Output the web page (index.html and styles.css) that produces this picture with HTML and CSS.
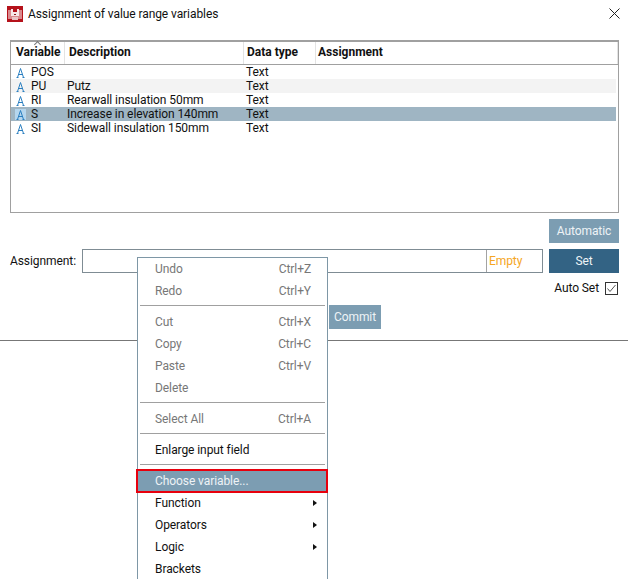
FILE: index.html
```html
<!DOCTYPE html>
<html lang="en">
<head>
    <meta charset="UTF-8">
    <title>Assignment of value range variables</title>
    <link rel="stylesheet" href="styles.css">
</head>
<body>
<div class="title_bar">
    <svg class="app_icon" width="16" height="16" viewBox="0 0 16 16">
        <rect width="16" height="16" fill="#b5121b"/>
        <path d="M1 4h14v9H1z" fill="#d98a8e"/>
        <path d="M4 3h8v7H4z" fill="#f7e6e7"/>
        <path d="M6 3h4v3H6z" fill="#b5121b"/>
        <path d="M5 11h6v3H5z" fill="#e9c3c5"/>
        <path d="M7 8h2v1H7z" fill="#8c1a20"/>
    </svg>
    <span class="title_text">Assignment of value range variables</span>
    <svg class="close_icon" width="11" height="11" viewBox="0 0 11 11">
        <path d="M0.5 0.5L10.5 10.5M10.5 0.5L0.5 10.5" stroke="#222" stroke-width="1" fill="none"/>
    </svg>
</div>

<div class="var_table">
    <div class="t_head">
        <div class="c_var">Variable<i class="sort_mark"></i></div>
        <div class="c_desc">Description</div>
        <div class="c_type">Data type</div>
        <div class="c_assign">Assignment</div>
    </div>
    <div class="t_row">
        <div class="c_var"><svg class="a_icon" width="11" height="11" viewBox="0 0 11 11"><path d="M1.5 10.5h2M7.5 10.5h2M2.5 10.5L5.5 1.5L8.5 10.5M3.5 7.5h4" stroke="#2a7fc0" fill="none"/></svg>POS</div>
        <div class="c_desc"></div>
        <div class="c_type">Text</div>
        <div class="c_assign"></div>
    </div>
    <div class="t_row alt">
        <div class="c_var"><svg class="a_icon" width="11" height="11" viewBox="0 0 11 11"><path d="M1.5 10.5h2M7.5 10.5h2M2.5 10.5L5.5 1.5L8.5 10.5M3.5 7.5h4" stroke="#2a7fc0" fill="none"/></svg>PU</div>
        <div class="c_desc">Putz</div>
        <div class="c_type">Text</div>
        <div class="c_assign"></div>
    </div>
    <div class="t_row">
        <div class="c_var"><svg class="a_icon" width="11" height="11" viewBox="0 0 11 11"><path d="M1.5 10.5h2M7.5 10.5h2M2.5 10.5L5.5 1.5L8.5 10.5M3.5 7.5h4" stroke="#2a7fc0" fill="none"/></svg>RI</div>
        <div class="c_desc">Rearwall insulation 50mm</div>
        <div class="c_type">Text</div>
        <div class="c_assign"></div>
    </div>
    <div class="t_row sel">
        <div class="c_var"><svg class="a_icon on" width="11" height="11" viewBox="0 0 11 11"><path d="M1.5 10.5h2M7.5 10.5h2M2.5 10.5L5.5 1.5L8.5 10.5M3.5 7.5h4" stroke="#2a7fc0" fill="none"/></svg>S</div>
        <div class="c_desc">Increase in elevation 140mm</div>
        <div class="c_type">Text</div>
        <div class="c_assign"></div>
    </div>
    <div class="t_row">
        <div class="c_var"><svg class="a_icon" width="11" height="11" viewBox="0 0 11 11"><path d="M1.5 10.5h2M7.5 10.5h2M2.5 10.5L5.5 1.5L8.5 10.5M3.5 7.5h4" stroke="#2a7fc0" fill="none"/></svg>SI</div>
        <div class="c_desc">Sidewall insulation 150mm</div>
        <div class="c_type">Text</div>
        <div class="c_assign"></div>
    </div>
</div>

<div class="btn_line auto_line">
    <a href="javascript:;" class="btn auto_btn">Automatic</a>
</div>
<div class="assign_line">
    <label class="assign_label">Assignment:</label>
    <div class="assign_box">
        <div class="assign_input"></div>
        <div class="assign_state">Empty</div>
    </div>
    <a href="javascript:;" class="btn set_btn">Set</a>
</div>
<div class="autoset_line">
    <span>Auto Set</span>
    <svg class="check_box" width="13" height="13" viewBox="0 0 13 13">
        <rect x="0.5" y="0.5" width="12" height="12" fill="#fff" stroke="#333"/>
        <path d="M2.5 6.5L5 9.5L10.5 3" stroke="#555" fill="none"/>
    </svg>
</div>
<div class="commit_line">
    <a href="javascript:;" class="btn commit_btn">Commit</a>
</div>
<div class="rule"></div>

<div class="menu">
    <div class="m_item off"><span>Undo</span><span>Ctrl+Z</span></div>
    <div class="m_item off"><span>Redo</span><span>Ctrl+Y</span></div>
    <div class="m_sep"></div>
    <div class="m_item off"><span>Cut</span><span>Ctrl+X</span></div>
    <div class="m_item off"><span>Copy</span><span>Ctrl+C</span></div>
    <div class="m_item off"><span>Paste</span><span>Ctrl+V</span></div>
    <div class="m_item off"><span>Delete</span></div>
    <div class="m_sep"></div>
    <div class="m_item off"><span>Select All</span><span>Ctrl+A</span></div>
    <div class="m_sep"></div>
    <div class="m_item"><span>Enlarge input field</span></div>
    <div class="m_sep"></div>
    <div class="m_item hot"><span>Choose variable...</span></div>
    <div class="m_item"><span>Function</span><i class="arrow"></i></div>
    <div class="m_item"><span>Operators</span><i class="arrow"></i></div>
    <div class="m_item"><span>Logic</span><i class="arrow"></i></div>
    <div class="m_item"><span>Brackets</span></div>
</div>
</body>
</html>
```
FILE: styles.css
```css
*{
    margin:0;
    padding:0;
    box-sizing:border-box;
    text-decoration:none;
}
html,body{
    height:579px;
    overflow:hidden;
}
body{
    position:relative;
    background:#fff;
    color:#111;
    font-family:Roboto,"Open Sans","Liberation Sans",sans-serif;
    font-size:12px;
    letter-spacing:-0.08px;
}
.title_bar{
    height:40px;
    padding:6px 8px 0 7px;
    display:flex;
    align-items:flex-start;
}
.app_icon{
    display:block;
}
.title_text{
    margin-left:5px;
    line-height:16px;
    flex:1;
}
.close_icon{
    margin-top:2px;
}
.var_table{
    margin:0 10px;
    width:609px;
    height:173px;
    border:1px solid #a0a0a0;
    border-top-width:2px;
}
.t_head{
    display:flex;
    height:23px;
    line-height:20px;
    font-weight:bold;
    letter-spacing:0;
    border-bottom:1px solid #a0a0a0;
}
.t_head div{
    border-right:1px solid #e3e3e3;
}
.t_row{
    display:flex;
    height:14px;
    line-height:14px;
    margin-right:2px;
}
.alt{
    background:#f3f3f3;
}
.sel{
    background:#9fb5c3;
}
.c_var{
    position:relative;
    width:54px;
    padding-left:5px;
    flex:none;
}
.t_row .c_var{
    display:flex;
    align-items:center;
    padding-left:4px;
}
.c_desc{
    width:179px;
    padding-left:4px;
    flex:none;
}
.t_row .c_desc{
    padding-left:2px;
}
.c_type{
    width:72px;
    padding-left:3px;
    flex:none;
}
.t_row .c_type{
    padding-left:2px;
}
.c_assign{
    flex:1;
    padding-left:2px;
}
.a_icon{
    margin-right:5px;
    flex:none;
}
.a_icon.on{
    background:#b5d6ee;
}
.sort_mark{
    position:absolute;
    left:24px;
    top:0;
    width:5px;
    height:5px;
    border-top:1px solid #777;
    border-left:1px solid #777;
    transform:rotate(45deg);
}
.btn{
    display:block;
    color:#eef3f6;
    text-align:center;
}
.btn_line{
    display:flex;
    justify-content:flex-end;
    padding-right:9px;
}
.auto_line{
    margin-top:6px;
}
.auto_btn{
    width:70px;
    height:24px;
    line-height:24px;
    background:#7c9db2;
}
.assign_line{
    display:flex;
    align-items:center;
    margin-top:6px;
    padding:0 9px 0 10px;
}
.assign_label{
    width:72px;
}
.assign_box{
    display:flex;
    width:461px;
    height:24px;
    border:1px solid #7f8c94;
    margin-right:6px;
}
.assign_input{
    flex:1;
    border-right:1px solid #a3a3a3;
}
.assign_state{
    width:55px;
    padding-left:2px;
    line-height:22px;
    color:#f5a623;
}
.set_btn{
    width:70px;
    height:24px;
    line-height:24px;
    background:#336384;
}
.autoset_line{
    display:flex;
    justify-content:flex-end;
    align-items:center;
    gap:6px;
    height:16px;
    margin-top:7px;
    padding-right:10px;
}
.commit_line{
    display:flex;
    margin-top:9px;
    padding-left:329px;
}
.commit_btn{
    width:52px;
    height:24px;
    line-height:24px;
    background:#7c9db2;
}
.rule{
    margin-top:11px;
    height:1px;
    background:#777;
}
.menu{
    position:absolute;
    left:137px;
    top:257px;
    width:191px;
    height:340px;
    background:#fff;
    border:1px solid #7e97a6;
    padding:0 2px;
}
.m_item{
    display:flex;
    justify-content:space-between;
    align-items:center;
    height:22px;
    padding:0 14px 0 15px;
    color:#111;
}
.m_item.off{
    color:#777;
}
.m_sep{
    height:1px;
    margin:3px 0 5px;
    background:#a0a0a0;
}
.m_item.hot{
    background:#7c9db2;
    color:#eef3f6;
    height:24px;
    margin:-1px -3px -1px -4px;
    padding-left:17px;
    border:2px solid #e8000d;
}
.arrow{
    width:0;
    height:0;
    border-left:4px solid #111;
    border-top:3px solid transparent;
    border-bottom:3px solid transparent;
    margin-right:-6px;
}
```
